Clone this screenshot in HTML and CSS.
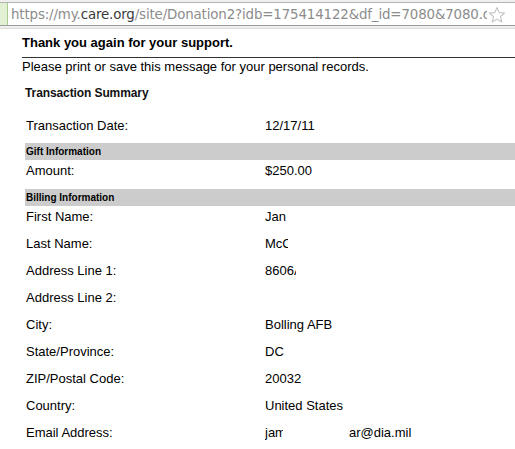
FILE: index.html
```html
<!DOCTYPE html>
<html>
<head>
<meta charset="utf-8">
<link rel="stylesheet" href="styles.css">
</head>
<body>
<div class="chrome">
  <div class="field">
    <div class="secure"></div>
    <div class="url"><span class="dim">https://my.</span><span class="host">care.org</span><span class="dim">/site/Donation2?idb=175414122&amp;df_id=7080&amp;7080.donation=form1</span></div>
    <svg class="star" width="18" height="18" viewBox="0 0 18 18"><polygon points="9,1.5 11.2,6.6 16.6,7 12.5,10.6 13.8,16 9,13.1 4.2,16 5.5,10.6 1.4,7 6.8,6.6" fill="none" stroke="#c4c4c4" stroke-width="1.1" stroke-linejoin="round"/></svg>
  </div>
</div>
<div class="page">
  <div class="thanks">Thank you again for your support.</div>
  <div class="note">Please print or save this message for your personal records.</div>
  <div class="summary">Transaction Summary</div>
  <div class="table">
    <div class="row"><span>Transaction Date:</span><span>12/17/11</span></div>
    <div class="band band-gift">Gift Information</div>
    <div class="row"><span>Amount:</span><span>$250.00</span></div>
    <div class="band band-bill">Billing Information</div>
    <div class="row"><span>First Name:</span><span>Jan</span></div>
    <div class="row"><span>Last Name:</span><span><span class="clip clip-mc">McCarthy</span></span></div>
    <div class="row"><span>Address Line 1:</span><span><span class="clip clip-addr">8606A Brookley</span></span></div>
    <div class="row"><span>Address Line 2:</span><span></span></div>
    <div class="row"><span>City:</span><span>Bolling AFB</span></div>
    <div class="row"><span>State/Province:</span><span>DC</span></div>
    <div class="row"><span>ZIP/Postal Code:</span><span>20032</span></div>
    <div class="row"><span>Country:</span><span>United States</span></div>
    <div class="row"><span>Email Address:</span><span class="email"><span class="clip clip-em">james</span><span class="em-tail">ar@dia.mil</span></span></div>
  </div>
</div>
</body>
</html>
```
FILE: styles.css
```css
html, body {
  margin: 0;
  padding: 0;
  background: #ffffff;
}
body {
  width: 515px;
  height: 449px;
  overflow: hidden;
  font-family: "Liberation Sans", Arial, sans-serif;
  color: #000;
}
.chrome {
  padding-top: 2px;
  background: #efefef;
  border-bottom: 1px solid #dcdcdc;
  box-sizing: border-box;
  height: 29px;
}
.field {
  height: 24px;
  box-sizing: border-box;
  background: #fff;
  border-top: 1px solid #b4b4b4;
  border-bottom: 1px solid #9a9a9a;
  display: flex;
  align-items: center;
  overflow: hidden;
  position: relative;
}
.secure {
  width: 7px;
  flex: none;
  align-self: stretch;
  background: #e2f1d4;
  border-right: 1px solid #a9cc8f;
}
.url {
  margin-left: 3px;
  font-family: "DejaVu Sans", sans-serif;
  font-size: 13.4px;
  white-space: nowrap;
  width: 481px;
  flex: none;
  overflow: hidden;
  color: #8c8c8c;
  letter-spacing: -0.15px;
}
.host {
  color: #3a3a3a;
}
.star {
  position: absolute;
  right: 9px;
  top: 3px;
  background: #fff;
  padding-left: 1px;
}
.page {
  padding-left: 22px;
}
.thanks {
  margin-top: 6px;
  font-size: 13px;
  font-weight: bold;
  line-height: 16px;
  padding-bottom: 6px;
  border-bottom: 1px solid #333;
}
.note {
  margin-top: 1px;
  font-size: 13px;
  line-height: 16px;
}
.summary {
  margin-top: 10px;
  padding-left: 3px;
  font-size: 12px;
  font-weight: bold;
  line-height: 16px;
  color: #111;
  letter-spacing: -0.1px;
}
.table {
  margin-top: 14px;
  padding-left: 3px;
}
.row {
  display: grid;
  grid-template-columns: 239px 1fr;
  height: 27px;
  box-sizing: border-box;
  padding-left: 1px;
  padding-top: 3px;
  font-size: 13px;
  line-height: 15px;
}
.band {
  height: 17px;
  background: #cccccc;
  font-size: 10px;
  font-weight: bold;
  line-height: 17px;
  padding-left: 1px;
}
.band-gift {
  margin-top: 1px;
}
.band-bill {
  margin-top: 2px;
}
.clip {
  display: inline-block;
  overflow: hidden;
  white-space: nowrap;
  vertical-align: top;
}
.clip-mc { width: 23px; }
.clip-addr { width: 31px; }
.clip-em { width: 18px; }
.email {
  display: flex;
  white-space: nowrap;
}
.em-tail {
  margin-left: 66px;
}
```
